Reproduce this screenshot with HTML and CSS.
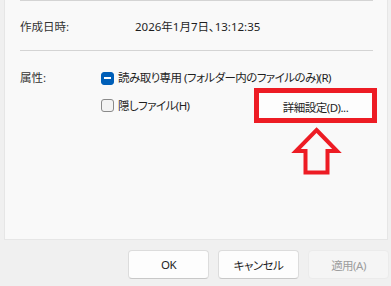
FILE: index.html
```html
<!DOCTYPE html>
<html lang="ja">
<head>
  <meta charset="UTF-8" />
  <title>プロパティ</title>
  <link rel="stylesheet" href="styles.css">
</head>
<body>
  <div class="panel">
    <div class="sep"></div>
    <div class="info-row">
      <span class="info-label">作成日時:</span>
      <span class="info-value">2026年1月7日、13:12:35</span>
    </div>
    <div class="sep"></div>
    <div class="attrs">
      <span class="attr-label">属性:</span>
      <div class="attr-list">
        <label class="check">
          <span class="box box-mixed"><span class="dash"></span></span>
          読み取り専用 (フォルダー内のファイルのみ)(R)
        </label>
        <div class="attr-row">
          <label class="check">
            <span class="box"></span>
            隠しファイル(H)
          </label>
          <div class="highlight">
            <button class="btn-advanced">詳細設定(D)...</button>
          </div>
        </div>
      </div>
    </div>
    <svg class="arrow" width="54" height="54" viewBox="0 0 54 54">
      <polygon points="26.5,6 47,27 37.5,27 37.5,48.5 15.5,48.5 15.5,27 6,27"
        fill="none" stroke="#ed1c24" stroke-width="4" stroke-linejoin="miter" />
    </svg>
  </div>
  <div class="footer">
    <button class="btn">OK</button>
    <button class="btn">キャンセル</button>
    <button class="btn" disabled>適用(A)</button>
  </div>
</body>
</html>
```

FILE: styles.css
```css
* { margin: 0; padding: 0; box-sizing: border-box; }
body {
  font-family: "Noto Sans", "Noto Sans CJK JP", sans-serif;
  font-size: 11.5px;
  font-feature-settings: "palt";
  color: #1f1f1f;
  background: #f0f0f0;
  width: 391px;
  height: 286px;
  overflow: hidden;
  position: relative;
}
.panel {
  margin: 0 3px 0 4px;
  height: 240px;
  background: #f9f9f9;
  border: 1px solid #e6e6e6;
  border-top: none;
  padding: 0 14px 0 15px;
}
.sep { height: 1px; background: #d4d4d4; }
.info-row {
  display: flex;
  align-items: center;
  height: 49px;
}
.info-label { width: 115px; color: #333; }
.attrs {
  display: flex;
  padding-top: 18px;
}
.attr-label { width: 81px; color: #333; line-height: 18px; }
.attr-list {
  flex: 1;
  display: flex;
  flex-direction: column;
  gap: 1px;
}
.check {
  display: flex;
  align-items: center;
  gap: 4px;
  line-height: 18px;
  letter-spacing: -0.55px;
}
.box {
  width: 13px;
  height: 13px;
  border: 1px solid #8a8a8a;
  border-radius: 3px;
  background: #f3f3f3;
  display: flex;
  align-items: center;
  justify-content: center;
}
.box-mixed { background: #005fb8; border-color: #005fb8; }
.dash { width: 7px; height: 1.5px; background: #fff; }
.attr-row {
  display: flex;
  align-items: center;
  justify-content: space-between;
  margin-right: -4px;
}
.highlight {
  width: 123px;
  height: 35px;
  border: 5px solid #ed1c24;
}
.btn-advanced {
  width: 100%;
  height: 100%;
  border: none;
  background: #fdfdfd;
  font: inherit;
  letter-spacing: -0.5px;
  color: #1f1f1f;
  padding-top: 2px;
}
.arrow {
  position: absolute;
  left: 290px;
  top: 124px;
}
.footer {
  display: flex;
  justify-content: flex-end;
  gap: 9px;
  padding: 10px 2px 0 0;
}
.btn {
  width: 81px;
  height: 29px;
  font: inherit;
  letter-spacing: -0.5px;
  color: #1f1f1f;
  background: #fdfdfd;
  border: 1px solid #dcdcdc;
  border-bottom-color: #c8c8c8;
  border-radius: 4px;
}
.btn:disabled {
  background: #f5f5f5;
  border-color: #ebebeb;
  color: #9d9d9d;
}
```
